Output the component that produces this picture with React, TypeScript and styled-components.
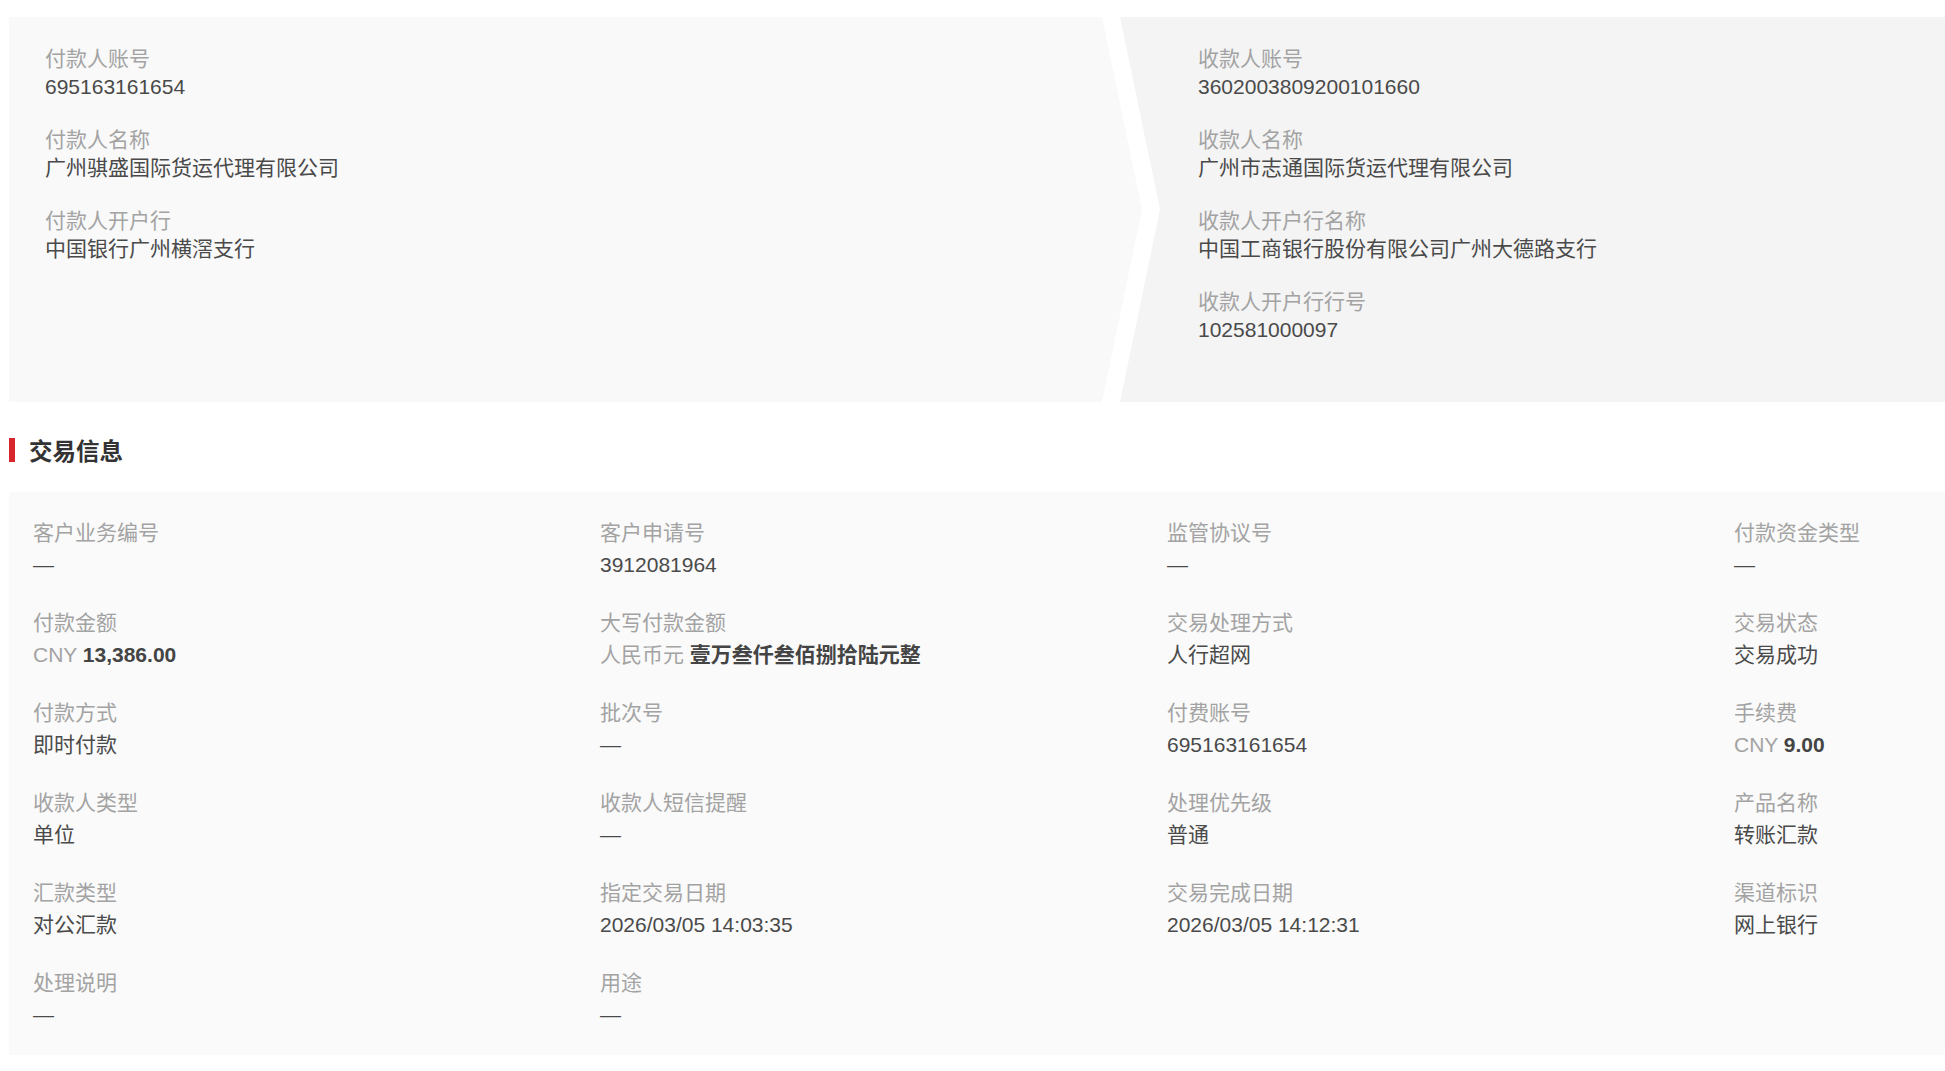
import React from "react";
import styled, { createGlobalStyle } from "styled-components";

interface Field {
    label: string
    value: string
    prefix?: string
    strong?: boolean
}

const payer: Field[] = [
    {label: '付款人账号', value: '695163161654'},
    {label: '付款人名称', value: '广州骐盛国际货运代理有限公司'},
    {label: '付款人开户行', value: '中国银行广州横滘支行'},
]

const payee: Field[] = [
    {label: '收款人账号', value: '3602003809200101660'},
    {label: '收款人名称', value: '广州市志通国际货运代理有限公司'},
    {label: '收款人开户行名称', value: '中国工商银行股份有限公司广州大德路支行'},
    {label: '收款人开户行行号', value: '102581000097'},
]

const trade: Field[] = [
    {label: '客户业务编号', value: '—'},
    {label: '客户申请号', value: '3912081964'},
    {label: '监管协议号', value: '—'},
    {label: '付款资金类型', value: '—'},
    {label: '付款金额', prefix: 'CNY', value: '13,386.00', strong: true},
    {label: '大写付款金额', prefix: '人民币元', value: '壹万叁仟叁佰捌拾陆元整', strong: true},
    {label: '交易处理方式', value: '人行超网'},
    {label: '交易状态', value: '交易成功'},
    {label: '付款方式', value: '即时付款'},
    {label: '批次号', value: '—'},
    {label: '付费账号', value: '695163161654'},
    {label: '手续费', prefix: 'CNY', value: '9.00', strong: true},
    {label: '收款人类型', value: '单位'},
    {label: '收款人短信提醒', value: '—'},
    {label: '处理优先级', value: '普通'},
    {label: '产品名称', value: '转账汇款'},
    {label: '汇款类型', value: '对公汇款'},
    {label: '指定交易日期', value: '2026/03/05 14:03:35'},
    {label: '交易完成日期', value: '2026/03/05 14:12:31'},
    {label: '渠道标识', value: '网上银行'},
    {label: '处理说明', value: '—'},
    {label: '用途', value: '—'},
]

function FieldValue({item}: { item: Field }) {
    return <>
        {item.prefix && <Prefix>{item.prefix} </Prefix>}
        {item.strong ? <Strong>{item.value}</Strong> : item.value}
    </>
}

function App() {
    return <Page>
        <GlobalStyle/>
        <Parties>
            <PayerPanel>
                {payer.map(item => <PartyItem key={item.label}>
                    <Label>{item.label}</Label>
                    <Value>{item.value}</Value>
                </PartyItem>)}
            </PayerPanel>
            <PayeePanel>
                {payee.map(item => <PartyItem key={item.label}>
                    <Label>{item.label}</Label>
                    <Value>{item.value}</Value>
                </PartyItem>)}
            </PayeePanel>
        </Parties>

        <SectionTitle>交易信息</SectionTitle>

        <TradePanel>
            <TradeGrid>
                {trade.map(item => <div key={item.label}>
                    <TradeLabel>{item.label}</TradeLabel>
                    <TradeValue><FieldValue item={item}/></TradeValue>
                </div>)}
            </TradeGrid>
        </TradePanel>
    </Page>
}

const GlobalStyle = createGlobalStyle`
    html, body {
        margin: 0;
        padding: 0;
        background: #ffffff;
        overflow: hidden;
    }

    body {
        font-family: "Liberation Sans", "Noto Sans CJK SC", sans-serif;
        font-size: 21px;
        color: #4a4a4a;
    }
`

const Page = styled.div`
    padding: 17px 0 0 9px;
    width: 1936px;
    overflow: hidden;
`

const Parties = styled.div`
    display: flex;
    height: 385px;
`

const PayerPanel = styled.div`
    flex: 0 0 1133px;
    box-sizing: border-box;
    padding: 28px 0 0 36px;
    background: #f9f9f9;
    clip-path: polygon(0 0, calc(100% - 40px) 0, 100% 50%, calc(100% - 40px) 100%, 0 100%);
`

const PayeePanel = styled.div`
    flex: 1;
    box-sizing: border-box;
    margin-left: -22px;
    padding: 28px 0 0 78px;
    background: #f4f4f4;
    clip-path: polygon(0 0, 100% 0, 100% 100%, 0 100%, 40px 50%);
`

const PartyItem = styled.div`
    margin-bottom: 25px;
`

const Label = styled.div`
    color: #a3a3a3;
    line-height: 28px;
`

const Value = styled.div`
    color: #4a4a4a;
    line-height: 28px;
`

const SectionTitle = styled.h2`
    display: flex;
    align-items: center;
    gap: 14px;
    margin: 33px 0 27px;
    height: 30px;
    font-size: 23.5px;
    font-weight: 700;
    color: #333333;

    &::before {
        content: '';
        width: 6px;
        height: 24px;
        background: #d7262d;
    }
`

const TradePanel = styled.div`
    background: #fafafa;
    padding: 25px 0 24px 24px;
    height: 563px;
    box-sizing: border-box;
    overflow: hidden;
`

const TradeGrid = styled.div`
    display: grid;
    grid-template-columns: repeat(4, 567px);
    row-gap: 26px;
`

const TradeLabel = styled.div`
    color: #a3a3a3;
    line-height: 32px;
`

const TradeValue = styled.div`
    color: #4a4a4a;
    line-height: 32px;
    white-space: nowrap;
`

const Prefix = styled.span`
    color: #a3a3a3;
`

const Strong = styled.span`
    font-weight: 700;
    color: #444444;
`

export default App;
